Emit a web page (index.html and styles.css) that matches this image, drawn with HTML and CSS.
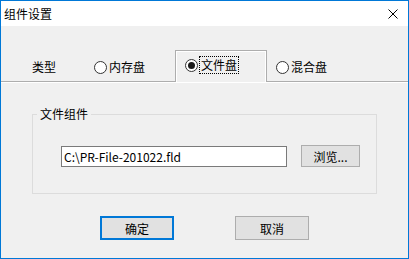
FILE: index.html
```html
<!DOCTYPE html>
<html lang="zh-CN">
<head>
    <meta charset="utf-8">
    <title>组件设置</title>
    <link rel="stylesheet" href="styles.css">
</head>
<body>
    <div class="window">
        <div class="titlebar">
            <span class="title">组件设置</span>
            <span class="close">
                <svg width="10" height="10" viewBox="0 0 10 10">
                    <path d="M0.5 0.5 L9.5 9.5 M9.5 0.5 L0.5 9.5" stroke="#000" stroke-width="1" fill="none"/>
                </svg>
            </span>
        </div>

        <div class="tabs">
            <span class="tab-label">类型</span>
            <div class="tab">
                <span class="radio"></span>
                <span class="tab-text">内存盘</span>
            </div>
            <div class="tab active">
                <span class="radio checked"></span>
                <span class="tab-text focus">文件盘</span>
            </div>
            <div class="tab">
                <span class="radio"></span>
                <span class="tab-text">混合盘</span>
            </div>
        </div>

        <div class="panel">
            <fieldset class="group">
                <legend>文件组件</legend>
                <div class="file-row">
                    <input type="text" class="path" value="C:\PR-File-201022.fld">
                    <button class="btn browse">浏览...</button>
                </div>
            </fieldset>

            <div class="actions">
                <button class="btn default">确定</button>
                <button class="btn">取消</button>
            </div>
        </div>
    </div>
</body>
</html>
```

FILE: styles.css
```css
body {
    margin: 0;
    padding: 0;
    font-family: "Noto Sans CJK SC", "Liberation Sans", sans-serif;
    font-size: 12px;
    line-height: 16px;
    color: #000;
    background: #f0f0f0;
}

.window {
    width: 409px;
    height: 259px;
    box-sizing: border-box;
    border: 1px solid #0078d7;
    background: #f0f0f0;
    overflow: hidden;
}

.titlebar {
    height: 25px;
    background: #ffffff;
    display: flex;
    align-items: center;
    justify-content: space-between;
    padding-left: 3px;
    padding-right: 10px;
}

.close {
    display: flex;
    width: 10px;
    height: 10px;
}

/* tab strip */
.tabs {
    height: 55px;
    display: flex;
    align-items: flex-end;
    padding-left: 31px;
}

.tab-label {
    height: 28px;
    line-height: 28px;
    margin-right: 38px;
}

.tab {
    height: 28px;
    display: flex;
    align-items: center;
}

.tab.active {
    position: relative;
    z-index: 1;
    box-sizing: border-box;
    width: 92px;
    height: 32px;
    margin: 0 9px -1px 30px;
    padding: 0 0 3px 9px;
    border: 1px solid #adadad;
    border-bottom: none;
    box-shadow: inset 1px 1px 0 #fff, inset -1px 0 0 #fff;
    background: #f0f0f0;
}

.radio {
    width: 13px;
    height: 13px;
    box-sizing: border-box;
    border: 1px solid #333;
    border-radius: 50%;
    background: #fff;
    display: flex;
    align-items: center;
    justify-content: center;
    margin-right: 2px;
}

.radio.checked::after {
    content: "";
    width: 7px;
    height: 7px;
    border-radius: 50%;
    background: #1a1a1a;
}

.tab-text.focus {
    outline: 1px dotted #000;
    outline-offset: 0;
    padding: 0 1px;
}

/* panel */
.panel {
    border-top: 1px solid #adadad;
    box-shadow: inset 0 1px 0 #fff;
    padding: 24px 0 0 31px;
}

.group {
    width: 345px;
    box-sizing: border-box;
    margin: 0;
    border: 1px solid #dcdcdc;
    padding: 23px 0 26px 0;
}

.group legend {
    padding: 0 3px;
    margin-left: 4px;
}

.file-row {
    display: flex;
    align-items: center;
    gap: 14px;
    padding-left: 28px;
}

.path {
    width: 226px;
    height: 21px;
    box-sizing: border-box;
    margin: 0;
    border: 1px solid #7a7a7a;
    background: #fff;
    padding: 0 2px;
    font-family: inherit;
    font-size: 12px;
    color: #000;
    outline: none;
}

.btn {
    box-sizing: border-box;
    margin: 0;
    height: 24px;
    width: 74px;
    padding: 0;
    border: 1px solid #adadad;
    background: #e1e1e1;
    font-family: inherit;
    font-size: 12px;
    color: #000;
}

.btn.browse {
    width: 59px;
    height: 22px;
}

.btn.default {
    border: 2px solid #0078d7;
}

.actions {
    display: flex;
    gap: 61px;
    padding: 22px 0 0 68px;
}
```
